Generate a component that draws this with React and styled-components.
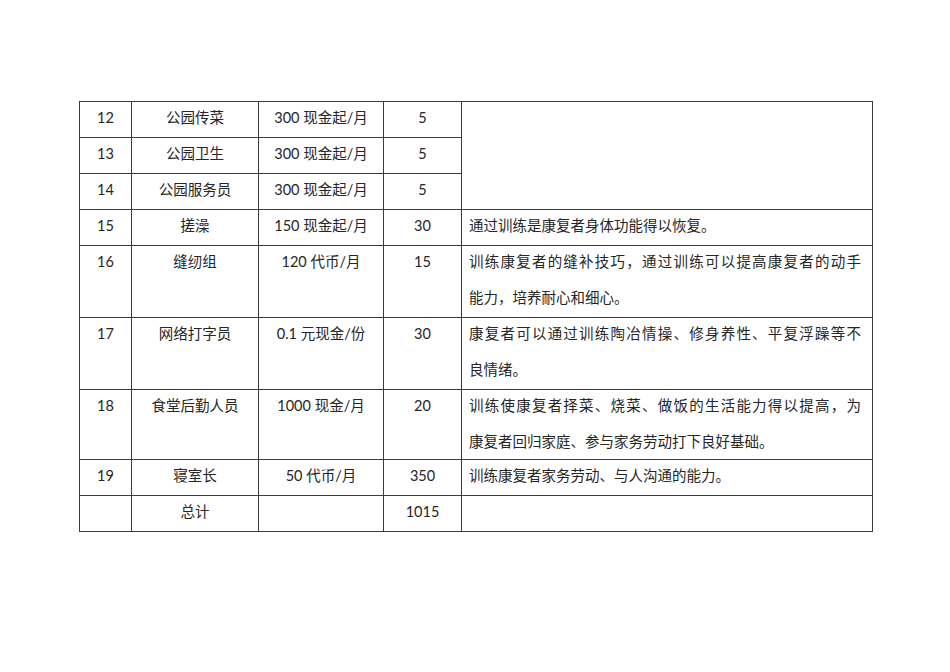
import React from 'react';
import styled, { createGlobalStyle } from 'styled-components';

const GlobalStyle = createGlobalStyle`
  html, body {
    margin: 0;
    padding: 0;
    background: #fff;
  }
`;

const rows = [
  { no: '12', name: '公园传菜', pay: '300 现金起/月', count: '5', desc: null, span: 3 },
  { no: '13', name: '公园卫生', pay: '300 现金起/月', count: '5', skip: true },
  { no: '14', name: '公园服务员', pay: '300 现金起/月', count: '5', skip: true },
  { no: '15', name: '搓澡', pay: '150 现金起/月', count: '30', desc: ['通过训练是康复者身体功能得以恢复。'] },
  {
    no: '16',
    name: '缝纫组',
    pay: '120 代币/月',
    count: '15',
    desc: ['训练康复者的缝补技巧，通过训练可以提高康复者的动手', '能力，培养耐心和细心。'],
  },
  {
    no: '17',
    name: '网络打字员',
    pay: '0.1 元现金/份',
    count: '30',
    desc: ['康复者可以通过训练陶冶情操、修身养性、平复浮躁等不', '良情绪。'],
  },
  {
    no: '18',
    name: '食堂后勤人员',
    pay: '1000 现金/月',
    count: '20',
    tight: true,
    desc: ['训练使康复者择菜、烧菜、做饭的生活能力得以提高，为', '康复者回归家庭、参与家务劳动打下良好基础。'],
  },
  { no: '19', name: '寝室长', pay: '50 代币/月', count: '350', desc: ['训练康复者家务劳动、与人沟通的能力。'] },
  { no: '', name: '总计', pay: '', count: '1015', desc: [] },
];

export default function App() {
  return (
    <>
      <GlobalStyle />
      <Page>
        <Table>
          <colgroup>
            <col style={{ width: '52px' }} />
            <col style={{ width: '127px' }} />
            <col style={{ width: '125px' }} />
            <col style={{ width: '78px' }} />
            <col style={{ width: '411px' }} />
          </colgroup>
          <tbody>
            {rows.map(row => (
              <tr key={row.no || 'total'}>
                <Cell>
                  <Text>{row.no}</Text>
                </Cell>
                <Cell>
                  <Text>{row.name}</Text>
                </Cell>
                <Cell>
                  <Text>{row.pay}</Text>
                </Cell>
                <Cell>
                  <Text>{row.count}</Text>
                </Cell>
                {!row.skip && (
                  <DescCell rowSpan={row.span || 1} $tight={row.tight}>
                    {(row.desc || []).map((line, i) => (
                      <Line key={i} $full={i < row.desc.length - 1}>
                        {line}
                      </Line>
                    ))}
                  </DescCell>
                )}
              </tr>
            ))}
          </tbody>
        </Table>
      </Page>
    </>
  );
}

const Page = styled.div`
  width: 950px;
  height: 672px;
  padding: 101px 0 0 79px;
  box-sizing: border-box;
  background: #fff;
`;

const Table = styled.table`
  width: 793px;
  table-layout: fixed;
  border-collapse: collapse;
  font-family: Lato, 'Noto Sans CJK SC', sans-serif;
  font-size: 14.5px;
  color: #262626;
`;

const Cell = styled.td`
  border: 1px solid #3c3c3c;
  padding: 0;
  vertical-align: top;
  text-align: center;
`;

const Text = styled.div`
  line-height: 32px;
  padding-bottom: 3px;
  white-space: nowrap;
`;

const DescCell = styled.td`
  border: 1px solid #3c3c3c;
  padding: 0 11px ${p => (p.$tight ? '0' : '1px')} 7px;
  vertical-align: top;
  text-align: left;

  & > div:last-child {
    margin-bottom: ${p => (p.$tight ? '-1px' : '0')};
  }
`;

const Line = styled.div`
  line-height: 36px;
  white-space: nowrap;
  text-align: justify;
  text-align-last: ${p => (p.$full ? 'justify' : 'left')};

  &:first-child {
    margin-top: -2px;
  }
`;
